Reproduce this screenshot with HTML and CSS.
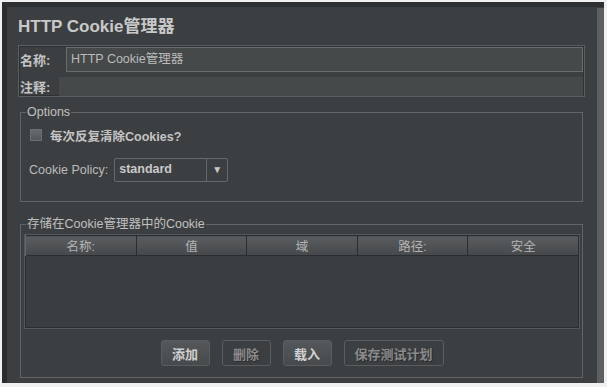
FILE: index.html
```html
<!DOCTYPE html>
<html lang="zh-CN">
<head>
    <meta charset="UTF-8">
    <title>HTTP Cookie管理器</title>
    <link rel="stylesheet" href="styles.css">
</head>
<body>
    <div class="window">
        <div class="main">
            <h1 class="title">HTTP Cookie管理器</h1>

            <div class="name-panel">
                <div class="name-row">
                    <label class="field-label">名称:</label>
                    <div class="text-field">HTTP Cookie管理器</div>
                </div>
                <div class="comment-row">
                    <label class="field-label">注释:</label>
                    <div class="comment-field"></div>
                </div>
            </div>

            <fieldset class="group options">
                <legend>Options</legend>
                <div class="check-row">
                    <span class="checkbox"></span>
                    <span class="check-text">每次反复清除Cookies?</span>
                </div>
                <div class="policy-row">
                    <span>Cookie Policy:</span>
                    <div class="combo">
                        <span class="combo-value">standard</span>
                        <span class="combo-arrow">&#9660;</span>
                    </div>
                </div>
            </fieldset>

            <fieldset class="group cookies">
                <legend>存储在Cookie管理器中的Cookie</legend>
                <table class="cookie-table">
                    <thead>
                        <tr>
                            <th>名称:</th>
                            <th>值</th>
                            <th>域</th>
                            <th>路径:</th>
                            <th>安全</th>
                        </tr>
                    </thead>
                    <tbody>
                        <tr><td colspan="5"></td></tr>
                    </tbody>
                </table>
                <div class="buttons">
                    <button class="btn">添加</button>
                    <button class="btn disabled">删除</button>
                    <button class="btn">载入</button>
                    <button class="btn disabled wide">保存测试计划</button>
                </div>
            </fieldset>
        </div>
        <div class="scrollbar"></div>
    </div>
</body>
</html>
```

FILE: styles.css
```css
body {
    margin: 0;
    background-color: #f0f0f0;
    font-family: "Liberation Sans", "Noto Sans CJK SC", sans-serif;
    font-size: 12px;
    color: #bbbbbb;
}
.window {
    display: flex;
    margin: 2px 3px 0 2px;
    height: 381px;
    background-color: #3c3f41;
    border-top: 5px solid #2e3133;
    border-left: 5px solid #2a2d2f;
    box-sizing: border-box;
}
.main {
    flex: 1;
    padding-top: 10px;
}
.scrollbar {
    width: 7px;
    margin-top: 1px;
    background-color: #5d6062;
}
.title {
    margin: 0 0 8px 11px;
    font-size: 17px;
    line-height: 20px;
    font-weight: bold;
    color: #c9c9c9;
}
.name-panel {
    margin: 0 12px 0 11px;
    height: 52px;
    box-sizing: border-box;
    border: 1px solid #5b5e60;
    box-shadow: inset 0 0 0 1px #2f3234;
    padding: 1px 1px 0 0;
}
.name-row {
    display: flex;
    align-items: center;
    height: 25px;
}
.comment-row {
    display: flex;
    align-items: center;
    height: 19px;
    margin-top: 5px;
}
.field-label {
    font-weight: bold;
    font-size: 13px;
    color: #c4c4c4;
    padding-left: 1px;
}
.name-row .field-label {
    width: 46px;
}
.comment-row .field-label {
    width: 39px;
}
.text-field {
    flex: 1;
    height: 25px;
    box-sizing: border-box;
    border: 1px solid #6a6d6f;
    background-color: #45494a;
    padding-left: 4px;
    line-height: 23px;
    font-size: 12.5px;
}
.comment-field {
    flex: 1;
    height: 19px;
    background-color: #45494a;
}
.group {
    margin: 8px 14px 0 13px;
    padding: 0 3px 0 4px;
    border: 1px solid #626567;
    min-width: 0;
}
.group legend {
    margin-left: 1px;
    padding: 0 1px;
    font-size: 12.5px;
    line-height: 14px;
    color: #c0c0c0;
}
.options {
    padding: 10px 0 19px 4px;
}
.check-row {
    display: flex;
    align-items: center;
    height: 12px;
    margin-left: 5px;
}
.checkbox {
    width: 12px;
    height: 12px;
    box-sizing: border-box;
    border: 1px solid #6b6e70;
    background: linear-gradient(#676a6c, #55585a);
    margin-right: 8px;
}
.check-text {
    font-size: 12.5px;
    font-weight: bold;
    color: #c4c4c4;
}
.policy-row {
    display: flex;
    align-items: center;
    margin: 17px 0 0 4px;
    font-size: 12.5px;
}
.combo {
    display: flex;
    margin-left: 6px;
    width: 114px;
    height: 24px;
    box-sizing: border-box;
    border: 1px solid #66696b;
    border-radius: 2px;
}
.combo-value {
    flex: 1;
    padding-left: 4px;
    line-height: 20px;
    font-weight: bold;
    color: #c8c8c8;
}
.combo-arrow {
    width: 20px;
    border-left: 1px solid #66696b;
    text-align: center;
    line-height: 22px;
    font-size: 10px;
    color: #c8c8c8;
}
.cookies {
    margin-top: 15px;
    padding-top: 4px;
    padding-bottom: 11px;
}
.cookie-table {
    width: 100%;
    border-collapse: collapse;
    table-layout: fixed;
    border: 1px solid #2b2e30;
    outline: 1px solid #55585a;
}
.cookie-table th {
    height: 17px;
    padding: 0;
    font-weight: normal;
    font-size: 12.5px;
    color: #b4b4b4;
    background: linear-gradient(#5a5d5f, #46494b);
    border-right: 1px solid #2b2e30;
    border-left: 1px solid #66696b;
}
.cookie-table td {
    height: 71px;
    padding: 0;
    background-color: #3b3e40;
    border-top: 1px solid #2b2e30;
}
.buttons {
    display: flex;
    justify-content: center;
    gap: 12px;
    margin-top: 12px;
}
.btn {
    width: 49px;
    height: 26px;
    padding: 0;
    border: 1px solid #5a5d5f;
    border-radius: 3px;
    background: linear-gradient(#54585a, #474a4c);
    font-family: "Noto Sans CJK SC", sans-serif;
    font-size: 13px;
    font-weight: bold;
    color: #d0d0d0;
}
.btn.disabled {
    background: #3c3f41;
    color: #8a8a8a;
    text-shadow: 1px 1px 0 #2a2c2e;
}
.btn.wide {
    width: 100px;
}
```
